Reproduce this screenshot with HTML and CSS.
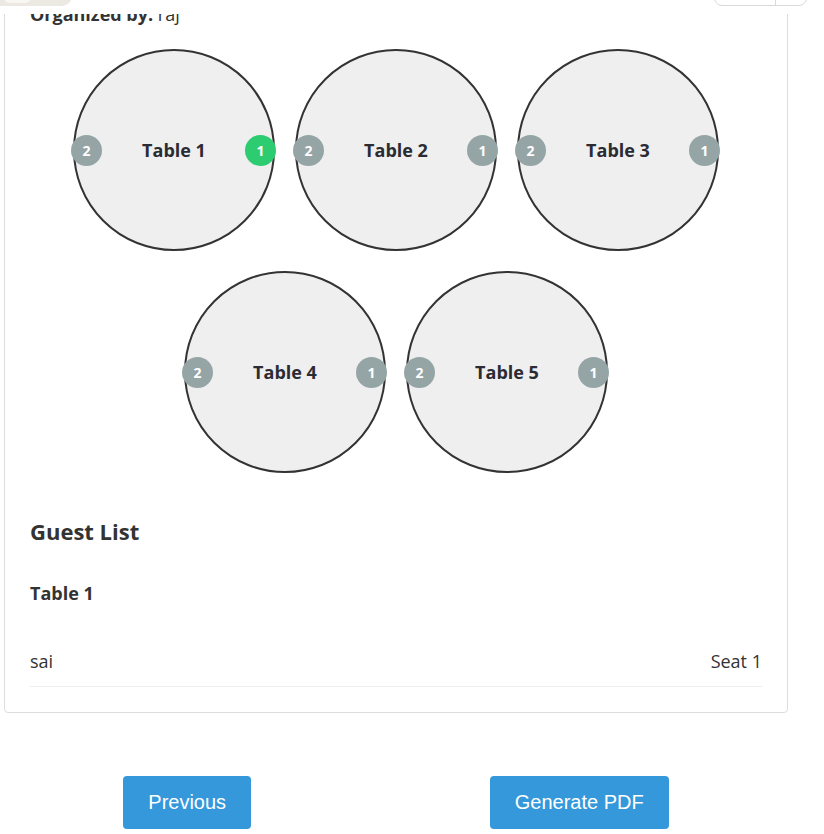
FILE: index.html
```html
<!DOCTYPE html>
<html lang="en">
<head>
<meta charset="utf-8">
<title>Seating Chart</title>
<link rel="stylesheet" href="styles.css">
</head>
<body>
<header class="topbar">
  <div class="pill"><span class="pill-knob"></span></div>
  <div class="btn-group"><span class="seg seg-a"></span><span class="seg seg-b"></span></div>
</header>
<main class="page">
  <section class="card">
    <p class="organizer"><strong>Organized by:</strong> raj</p>
    <div class="tables">
      <div class="table"><span class="seat seat-left">2</span><span class="table-name">Table 1</span><span class="seat seat-right seat-taken">1</span></div>
      <div class="table"><span class="seat seat-left">2</span><span class="table-name">Table 2</span><span class="seat seat-right">1</span></div>
      <div class="table"><span class="seat seat-left">2</span><span class="table-name">Table 3</span><span class="seat seat-right">1</span></div>
      <div class="table"><span class="seat seat-left">2</span><span class="table-name">Table 4</span><span class="seat seat-right">1</span></div>
      <div class="table"><span class="seat seat-left">2</span><span class="table-name">Table 5</span><span class="seat seat-right">1</span></div>
    </div>
    <h3 class="guest-title">Guest List</h3>
    <div class="guest-group">
      <h4 class="group-title">Table 1</h4>
      <div class="guest-row"><span>sai</span><span>Seat 1</span></div>
    </div>
  </section>
  <div class="actions">
    <button class="btn">Previous</button>
    <button class="btn">Generate PDF</button>
  </div>
</main>
</body>
</html>
```

FILE: styles.css
```css
* { box-sizing: border-box; }
html, body { margin: 0; padding: 0; background: #fff; }
body {
  font-family: "Open Sans", "Noto Sans", sans-serif;
  color: #333;
  width: 824px;
  height: 834px;
  overflow: hidden;
}

.topbar {
  position: fixed;
  top: 0; left: 0; right: 0;
  height: 14px;
  background: #fff;
  z-index: 10;
  display: flex;
  justify-content: space-between;
  align-items: flex-start;
  padding-right: 17px;
  overflow: hidden;
}
.pill {
  width: 72px;
  height: 30px;
  margin-top: -24px;
  background: #ece9e2;
  border-radius: 0 0 10px 0;
  padding: 0 0 3px 3px;
  display: flex;
  align-items: flex-end;
}
.pill-knob {
  display: block;
  width: 29px;
  height: 12px;
  background: #f8f7f4;
  border-radius: 0 0 7px 7px;
}
.btn-group {
  display: flex;
  height: 30px;
  margin-top: -24px;
  border: 1px solid #d9d9d9;
  border-radius: 0 0 8px 8px;
  background: #fff;
}
.seg { display: block; height: 100%; }
.seg-a { width: 61px; border-right: 1px solid #d9d9d9; }
.seg-b { width: 30px; }

.page {
  margin-left: 4px;
  width: 784px;
}

.card {
  margin-top: 1px;
  border: 1px solid #ddd;
  border-radius: 4px;
  padding: 0 25px 25px;
  background: #fff;
}

.organizer {
  margin: 0;
  font-size: 18px;
  line-height: 25px;
}

.tables {
  margin-top: 22px;
  display: flex;
  flex-wrap: wrap;
  justify-content: center;
  gap: 20px;
}
.table {
  position: relative;
  width: 202px;
  height: 202px;
  border: 2px solid #333;
  border-radius: 50%;
  background: #efefef;
  display: flex;
  align-items: center;
  justify-content: center;
}
.table-name {
  font-size: 18px;
  font-weight: 700;
  color: #2b2b33;
}
.seat {
  position: absolute;
  top: 84px;
  width: 31px;
  height: 31px;
  border-radius: 50%;
  background: #95a5a6;
  color: #fff;
  font-size: 14px;
  font-weight: 700;
  display: flex;
  align-items: center;
  justify-content: center;
}
.seat-left { left: -4px; }
.seat-right { right: -3px; }
.seat-taken { background: #2ecc71; }

.guest-title {
  margin: 43px 0 0;
  font-size: 22px;
  line-height: 30px;
  font-weight: 700;
  color: #333;
}
.group-title {
  margin: 35px 0 0;
  font-size: 18px;
  line-height: 24px;
  font-weight: 700;
}
.guest-row {
  margin-top: 32px;
  display: flex;
  justify-content: space-between;
  font-size: 18px;
  line-height: 24px;
  padding: 12px 0 13px;
  border-bottom: 1px solid #eee;
}

.actions {
  margin-top: 63px;
  display: flex;
  justify-content: space-around;
}
.btn {
  font-family: "Liberation Sans", Arial, sans-serif;
  font-size: 20px;
  line-height: 23px;
  color: #fff;
  background: #3498db;
  border: 0;
  border-radius: 4px;
  padding: 15px 25px;
}
```
